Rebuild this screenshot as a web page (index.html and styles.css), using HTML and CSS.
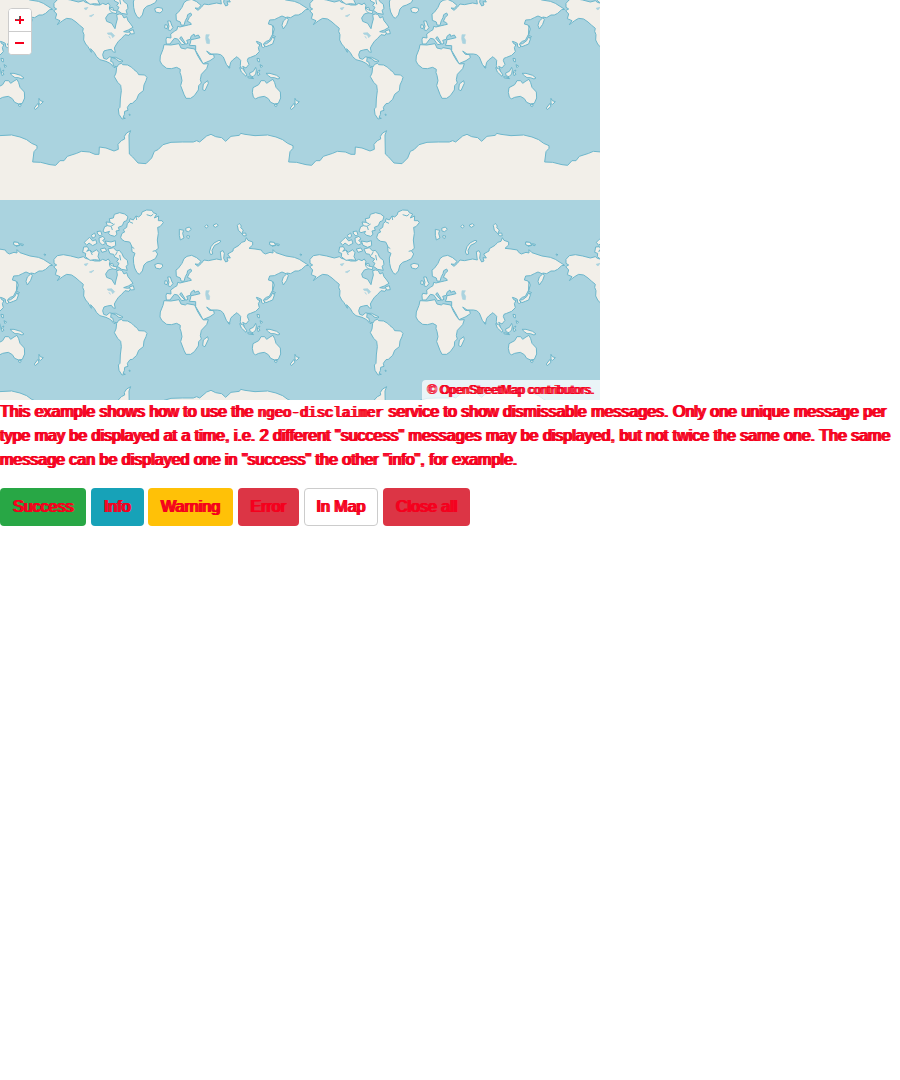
FILE: index.html
```html
<!DOCTYPE html>
<html lang="en">
<head>
<meta charset="utf-8">
<title>Disclaimer example</title>
<link rel="stylesheet" href="styles.css">
</head>
<body>
<main>
<div class="map">
<svg class="world" viewBox="0 0 600 400" preserveAspectRatio="xMinYMin slice" role="img" aria-label="World map">
<defs>
<g id="tile" transform="scale(.33333)">
<g class="land">
<path d="M162 178L172 167L190 164L212 168L235 174L250 170L256 175L275 180L284 183L300 183L308 178L318 182L325 177L330 185L328 192L338 190L341 198L338 206L325 210L317 222L320 232L335 238L340 246L345 254L348 240L352 225L350 212L358 210L366 211L372 222L380 218L384 230L392 240L399 250L385 258L371 263L383 265L395 262L387 274L375 272L365 283L355 292L348 303L343 312L346 325L340 324L334 316L322 318L312 321L308 332L311 343L320 346L328 339L334 339L332 352L339 355L340 366L350 368L342 371L332 359L318 352L300 347L290 338L283 326L272 314L274 325L264 308L257 300L251 288L252 272L248 262L250 253L238 243L228 234L215 225L200 223L188 230L172 242L180 230L166 224L170 210L161 200L170 195L162 190Z"/>
<path d="M350 370L356 361L364 358L368 362L383 363L395 370L402 377L412 385L416 392L434 393L441 400L438 410L432 423L430 440L416 451L410 466L397 478L390 479L382 490L384 499L374 502L373 512L369 520L376 523L366 525L357 511L355 495L360 490L361 465L364 440L362 424L353 415L343 398L348 387Z"/>
<path d="M362 112L366 100L374 96L370 89L380 82L382 70L388 66L390 56L400 60L408 48L416 51L424 44L426 36L440 30L456 31L460 38L470 42L463 54L476 48L475 62L486 62L490 68L480 80L473 82L475 100L472 120L475 145L466 152L473 162L466 176L452 183L440 187L432 195L427 213L418 223L411 218L404 204L401 190L400 174L405 160L396 155L395 138L389 126L374 124L365 118Z"/>
<path d="M309 94L314 80L322 77L318 66L330 67L328 56L340 54L343 43L359 38L374 42L384 50L380 62L372 65L367 77L355 82L358 91L348 93L351 103L344 109L332 106L325 100L329 94L315 98Z"/>
<path d="M251 141L262 140L266 147L260 154L270 150L277 157L290 149L297 158L294 170L300 181L283 179L270 181L256 170L257 160L248 157Z"/>
<path d="M253 127L262 118L269 112L278 123L287 119L291 130L278 137L267 129L260 136ZM274 106L284 99L287 109L278 115ZM291 95L302 93L306 104L300 108L293 102ZM297 114L309 109L315 117L308 121L317 130L307 135L298 126ZM316 123L333 126L346 122L347 137L335 142L321 136ZM301 147L315 144L320 153L306 157ZM324 147L340 143L350 153L358 151L366 161L371 172L382 181L384 194L378 199L382 211L365 208L352 199L357 190L350 185L356 177L344 171L341 163L330 161ZM328 192L338 198L351 201L349 209L336 206L330 199Z"/>
<path d="M335 340L347 340L357 345L369 351L366 354L354 351L349 345ZM388 261L400 257L403 269L392 270ZM387 510L391 512L389 515ZM42 126L54 127L59 136L48 137L40 133ZM61 131L70 133L67 138ZM132 162L138 164L134 167Z"/>
<path d="M464 194L474 190L487 193L488 200L480 207L467 204ZM538 88L551 91L548 100L552 114L541 120L538 106ZM557 85L568 81L574 88L566 95L558 93ZM561 107L569 108L566 116L560 112ZM614 80L620 74L625 79L619 84ZM640 75L649 71L655 76L647 82L641 79ZM712 76L718 70L724 78L722 83L730 90L726 100L737 99L739 107L731 108L723 98L715 91ZM632 164L628 156L633 140L642 129L657 121L663 123L658 129L644 136L636 151L638 162ZM809 126L824 128L828 136L816 139L809 132ZM830 133L838 135L834 138Z"/>
<path d="M528 210L535 205L546 190L552 176L561 169L575 166L590 173L603 184L595 193L585 192L594 199L604 190L612 180L625 182L650 177L664 180L662 165L661 155L669 152L673 160L671 175L677 186L684 183L681 173L691 174L683 162L699 153L700 146L717 136L725 127L735 124L739 113L744 121L758 126L758 135L747 145L765 147L784 150L788 157L796 162L810 157L819 159L819 149L828 158L858 168L883 172L898 178L926 196L917 197L905 208L895 213L885 213L872 221L860 219L865 227L860 241L850 255L846 244L850 231L860 222L846 216L835 221L823 227L809 228L805 240L816 243L820 250L817 272L808 289L799 292L792 298L795 306L791 311L785 308L784 298L776 294L769 292L773 299L780 302L775 311L778 323L767 334L752 340L744 343L742 350L747 361L738 372L728 367L733 379L727 382L721 365L722 349L711 338L698 348L692 355L688 372L679 361L670 339L662 332L652 330L633 330L620 321L628 331L641 332L643 341L630 350L609 359L599 340L587 320L587 305L568 304L571 297L573 287L584 285L600 281L595 273L584 277L582 270L573 277L571 286L560 289L564 298L557 301L552 291L544 278L539 282L546 291L555 300L545 302L533 285L523 283L510 300L499 300L498 287L500 280L513 282L512 270L523 262L531 257L533 247L540 249L552 246L565 243L574 241L571 236L562 232L568 220L575 213L572 207L563 212L561 221L556 230L552 244L543 243L541 234L529 229Z"/>
<path d="M492 302L513 303L537 299L543 312L556 315L561 311L584 315L592 333L602 350L610 360L625 359L620 374L604 391L601 407L604 417L596 425L595 438L583 455L572 463L558 463L552 451L542 425L546 410L543 394L540 386L541 376L530 370L514 374L500 373L486 362L480 351L481 336L489 316Z"/>
<path d="M623 410L625 418L615 440L608 437L610 420ZM684 368L690 369L688 373ZM719 371L728 374L741 393L738 397L724 384ZM749 387L760 382L767 370L769 378L767 390L759 398L750 395ZM743 398L759 401L761 404L745 402ZM772 382L780 378L776 385L780 391L774 395ZM771 343L778 344L778 354L773 352ZM780 362L788 366L783 371ZM798 388L810 388L830 394L840 402L834 405L823 401L813 401L805 395ZM759 431L776 422L783 410L794 410L800 418L810 411L819 406L824 416L828 430L841 444L842 462L835 478L824 480L812 475L805 464L793 457L776 460L766 465L760 459L757 445ZM824 480L832 482L829 488L824 486ZM885 463L889 470L898 473L890 481L885 479ZM882 478L885 487L874 497L871 492ZM789 301L800 299L812 290L817 280L824 283L818 300L808 304L798 308ZM818 274L820 282L827 278ZM819 245L823 255L818 272Z"/>
<path d="M495 242L503 244L501 254L494 252ZM503 231L511 231L515 243L519 251L511 260L504 257L507 247Z"/>
</g>
<path class="ice" d="M35 573L60 579L80 587L95 598L111 605L111 613L102 623L98 654L122 655L150 662L167 664L180 650L192 650L202 637L230 628L244 622L268 624L285 631L297 631L298 609L318 612L342 621L355 616L354 601L364 590L374 585L373 577L380 567L392 560L387 573L388 630L398 639L414 657L438 659L455 642L463 622L474 617L489 602L513 595L547 594L580 594L590 590L599 594L620 576L633 571L647 578L665 581L677 592L693 577L718 574L722 568L735 571L765 575L803 573L815 576V768H35Z"/>
<path class="shore" d="M35 573L60 579L80 587L95 598L111 605L111 613L102 623L98 654L122 655L150 662L167 664L180 650L192 650L202 637L230 628L244 622L268 624L285 631L297 631L298 609L318 612L342 621L355 616L354 601L364 590L374 585L373 577L380 567L392 560L387 573L388 630L398 639L414 657L438 659L455 642L463 622L474 617L489 602L513 595L547 594L580 594L590 590L599 594L620 576L633 571L647 578L665 581L677 592L693 577L718 574L722 568L735 571L765 575L803 573"/>
<path class="shore" d="M322 77L333 79L344 72M330 67L340 72M334 80L337 90M359 165L362 181M352 155L346 166M270 150L277 165M390 66L399 70M408 48L410 60M440 44L453 48L460 42M395 140L403 146M466 152L458 154"/>
<path class="lake" d="M618 272L628 272L624 280L629 289L628 299L620 298L617 284ZM252 193L264 190L258 198ZM268 216L282 211L274 218ZM322 267L335 266L344 275L338 281L334 273L324 271ZM327 277L331 283Z"/>
</g>
<g id="column"><use href="#tile" y="-256"/><use href="#tile"/></g>
</defs>
<rect class="sea" width="600" height="400"/>
<g transform="translate(0 200)"><use href="#column" x="-256"/><use href="#column"/><use href="#column" x="256"/><use href="#column" x="512"/></g>
</svg>
<div class="zoom"><button type="button" aria-label="Zoom in"><svg viewBox="0 0 22 22"><path class="halo" d="M6 11H15M11 7V15"/><path class="mark" d="M7 10.5H10M10.5 7V10"/></svg></button><button type="button" aria-label="Zoom out"><svg viewBox="0 0 22 22"><path class="halo" d="M6 11H15"/></svg></button></div>
<div class="attribution">© OpenStreetMap contributors.</div>
</div>
<p class="description">This example shows how to use the <code>ngeo-disclaimer</code> service to show dismissable messages. Only one unique message per type may be displayed at a time, i.e. 2 different "success" messages may be displayed, but not twice the same one. The same message can be displayed one in "success" the other "info", for example.</p>
<div class="actions">
<button type="button" class="btn success">Success</button>
<button type="button" class="btn info">Info</button>
<button type="button" class="btn warning">Warning</button>
<button type="button" class="btn danger">Error</button>
<button type="button" class="btn plain">In Map</button>
<button type="button" class="btn danger">Close all</button>
</div>
</main>
</body>
</html>
```
FILE: styles.css
```css
* { box-sizing: border-box; }
body {
  margin: 0;
  background: #fff;
  color: #f5001d;
  font: 16px/24px "Liberation Sans", Arial, sans-serif;
}
.map {
  position: relative;
  width: 100%;
  max-width: 600px;
  height: 400px;
  overflow: hidden;
}
.world { display: block; width: 100%; height: 100%; }
.sea { fill: #aad3df; }
.land { fill: #f2efe9; stroke: #6cb6cb; stroke-width: 3; stroke-linejoin: round; }
.ice { fill: #f2efe9; }
.shore { fill: none; stroke: #6cb6cb; stroke-width: 3; stroke-linejoin: round; }
.lake { fill: #aad3df; stroke: #aad3df; stroke-width: 2; }
.zoom {
  position: absolute;
  top: 8px;
  left: 8px;
  display: flex;
  flex-direction: column;
  width: 24px;
  border: 1px solid #ccc;
  border-radius: 4px;
  background: #fff;
  overflow: hidden;
}
.zoom button {
  display: block;
  height: 22px;
  padding: 0;
  border: 0;
  background: #fff;
}
.zoom button + button { height: 23px; border-top: 1px solid #ccc; }
.zoom svg { display: block; width: 22px; height: 22px; }
.halo { stroke: #f5001d; stroke-width: 2; }
.mark { stroke: #666; stroke-width: 1; }
.attribution {
  position: absolute;
  right: 0;
  bottom: 0;
  padding: 0 6px;
  border-radius: 4px 0 0;
  background: rgba(255, 255, 255, .75);
  font-size: 12px;
  line-height: 20px;
  text-shadow: -1px 0 #f5001d, 1px 0 #f5001d;
}
.description { margin: 0 0 16px; text-shadow: -1px 0 #f5001d, 1px 0 #f5001d; }
code { font-family: "Liberation Mono", monospace; font-size: 14px; line-height: 16px; }
.btn {
  padding: 6px 12px;
  border: 1px solid transparent;
  border-radius: 4px;
  color: #f5001d;
  font: inherit;
  text-shadow: -1px 0 #f5001d, 1px 0 #f5001d;
}
.success { background: #28a745; }
.info { background: #17a2b8; }
.warning { background: #ffc107; }
.danger { background: #dc3545; }
.plain { border-color: #ccc; background: #fff; }
```
